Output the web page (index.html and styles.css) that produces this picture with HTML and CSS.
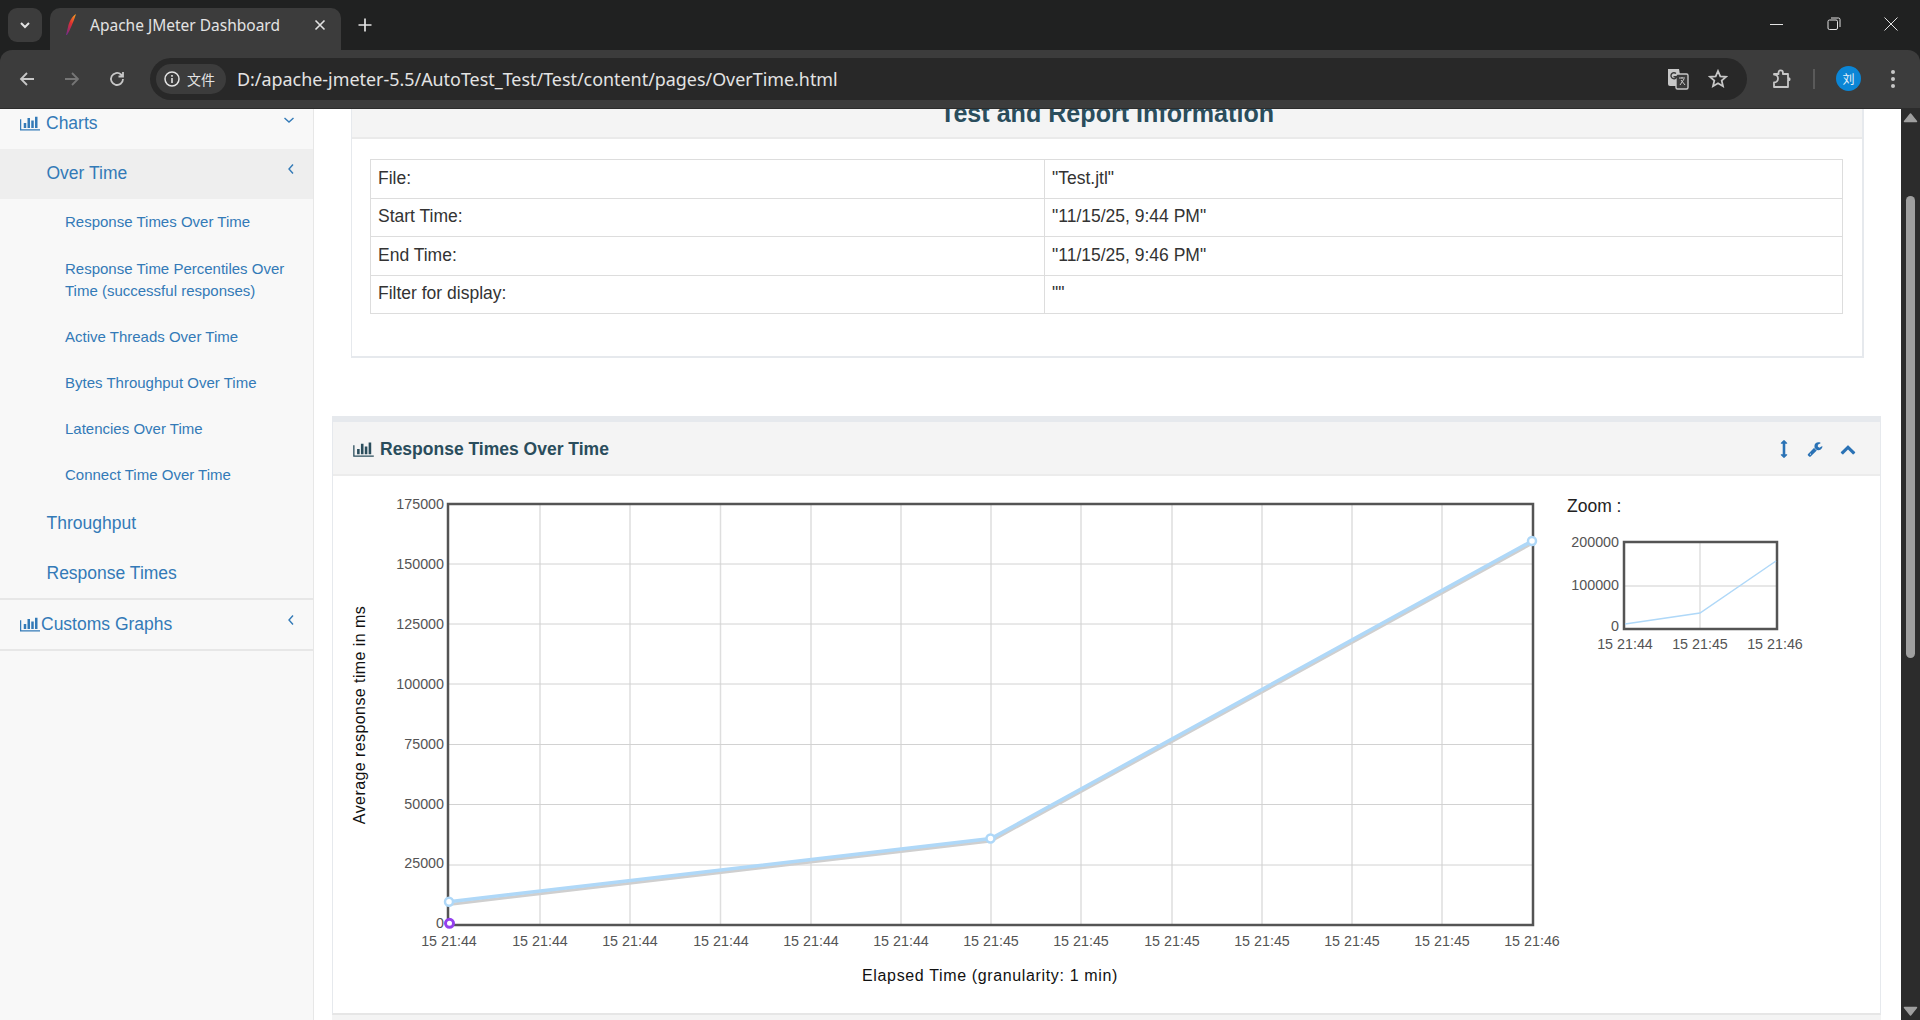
FILE: index.html
```html
<!DOCTYPE html>
<html lang="en">
<head>
<meta charset="utf-8">
<title>Apache JMeter Dashboard</title>
<link rel="stylesheet" href="styles.css">
</head>
<body>
<svg class="defs" width="0" height="0" aria-hidden="true">
  <symbol id="bars" viewBox="0 0 2048 1792"><path d="M640 896v512h-256v-512h256zm384-512v1024h-256v-1024h256zm1024 1152v128h-2048v-1152h128v1024h1920zm-640-896v768h-256v-768h256zm384-384v1152h-256v-1152h256z"/></symbol>
</svg>
<header class="browser">
  <div class="tabstrip">
    <button class="tabsearch"><svg width="14" height="14" viewBox="0 0 14 14"><path d="M3 5l4 4 4-4" fill="none" stroke="#e3e3e3" stroke-width="2"/></svg></button>
    <div class="tab">
      <svg class="favicon" width="12" height="22" viewBox="0 0 12 22"><defs><linearGradient id="fg" x1="0.8" y1="0" x2="0.2" y2="1"><stop offset="0" stop-color="#f69923"/><stop offset="0.45" stop-color="#e0302f"/><stop offset="1" stop-color="#7b2a86"/></linearGradient></defs><path d="M11 0C7 2 4 8 3 13L1 21l1 0C5 16 8 9 11 0z" fill="url(#fg)"/></svg>
      <span class="tab-title">Apache JMeter Dashboard</span>
      <svg class="tab-x" width="12" height="12" viewBox="0 0 12 12"><path d="M1.5 1.5l9 9m0-9l-9 9" stroke="#e3e3e3" stroke-width="1.6"/></svg>
    </div>
    <svg class="newtab" width="16" height="16" viewBox="0 0 16 16"><path d="M8 1.5v13M1.5 8h13" stroke="#e3e3e3" stroke-width="1.7"/></svg>
    <div class="winctl">
      <svg width="14" height="14" viewBox="0 0 14 14"><path d="M0 7.5h13" stroke="#e3e3e3" stroke-width="1"/></svg>
      <svg width="14" height="14" viewBox="0 0 14 14"><rect x="1" y="3" width="9.5" height="9.5" rx="1.5" fill="none" stroke="#e3e3e3"/><path d="M4 1h7.5a1.5 1.5 0 0 1 1.5 1.5V10" fill="none" stroke="#e3e3e3"/></svg>
      <svg width="14" height="14" viewBox="0 0 14 14"><path d="M.5.5l13 13m0-13l-13 13" stroke="#e3e3e3" stroke-width="1"/></svg>
    </div>
  </div>
  <div class="toolbar">
    <svg class="nav" width="18" height="18" viewBox="0 0 18 18"><path d="M16 9H3M9 3L3 9l6 6" fill="none" stroke="#c7c7c7" stroke-width="1.8"/></svg>
    <svg class="nav" width="18" height="18" viewBox="0 0 18 18"><path d="M2 9h13M9 3l6 6-6 6" fill="none" stroke="#757575" stroke-width="1.8"/></svg>
    <svg class="nav" width="18" height="18" viewBox="0 0 18 18"><path d="M15 9a6 6 0 1 1-2-4.5L15 6.5M15 2v4.5h-4.5" fill="none" stroke="#c7c7c7" stroke-width="1.8"/></svg>
    <div class="omnibox">
      <div class="chip">
        <svg width="16" height="16" viewBox="0 0 16 16"><circle cx="8" cy="8" r="7" fill="none" stroke="#e3e3e3" stroke-width="1.5"/><path d="M8 7v5M8 4v1.8" stroke="#e3e3e3" stroke-width="1.6"/></svg>
        <span class="chip-text">文件</span>
      </div>
      <span class="url">D:/apache-jmeter-5.5/AutoTest_Test/Test/content/pages/OverTime.html</span>
      <svg class="translate" width="22" height="22" viewBox="0 0 22 22"><path d="M1 1h11l3 17H3a2 2 0 0 1-2-2z" fill="#c7c7c7"/><rect x="9" y="6" width="12" height="15" rx="1.5" fill="#3a3a3a" stroke="#c7c7c7" stroke-width="1.4"/><path d="M12 10h6M15 9v1.5M13 17l4-6M14 12l4 5" stroke="#c7c7c7" fill="none"/><path d="M9 5.5a3 3 0 1 0 .8 3.2H6.5" fill="none" stroke="#3a3a3a" stroke-width="1.4"/></svg>
      <svg class="star" width="20" height="20" viewBox="0 0 20 20"><path d="M10 2l2.3 5.3 5.7.5-4.3 3.8 1.3 5.6L10 14.3l-5 2.9 1.3-5.6L2 7.8l5.7-.5z" fill="none" stroke="#c7c7c7" stroke-width="1.8"/></svg>
    </div>
    <svg class="ext" width="22" height="22" viewBox="0 0 22 22"><path d="M3 6h4.5V4.5a2.2 2.2 0 0 1 4.4 0V6H17v4.500h1.5a2.2 2.2 0 0 1 0 1.500H17v7H3v-4.500a3 3 0 0 0 0-8z" fill="none" stroke="#c7c7c7" stroke-width="1.8" stroke-linejoin="round"/></svg>
    <span class="divider"></span>
    <span class="avatar">刘</span>
    <svg class="dots" width="6" height="20" viewBox="0 0 6 20"><circle cx="3" cy="3" r="2" fill="#c7c7c7"/><circle cx="3" cy="10" r="2" fill="#c7c7c7"/><circle cx="3" cy="17" r="2" fill="#c7c7c7"/></svg>
  </div>
</header>
<div class="page">
  <nav class="sidebar">
    <div class="side-section">
      <a class="side-top raised"><svg class="bars-icon"><use href="#bars"/></svg><span class="side-label">Charts</span><svg class="angle" width="12" height="12" viewBox="0 0 12 12"><path d="M1.5 4L6 8l4.500-4" fill="none" stroke="#337ab7" stroke-width="1.4"/></svg></a>
      <a class="side-mid active raised">Over Time<svg class="angle angle-left" width="12" height="12" viewBox="0 0 12 12"><path d="M8 1.500L4 6l4 4.500" fill="none" stroke="#337ab7" stroke-width="1.4"/></svg></a>
      <ul class="side-sub">
        <li>Response Times Over Time</li>
        <li>Response Time Percentiles Over Time (successful responses)</li>
        <li>Active Threads Over Time</li>
        <li>Bytes Throughput Over Time</li>
        <li>Latencies Over Time</li>
        <li>Connect Time Over Time</li>
      </ul>
      <a class="side-mid">Throughput</a>
      <a class="side-mid">Response Times</a>
    </div>
    <div class="side-section last">
      <a class="side-top"><svg class="bars-icon"><use href="#bars"/></svg><span class="side-label tight">Customs Graphs</span><svg class="angle angle-left" width="12" height="12" viewBox="0 0 12 12"><path d="M8 1.500L4 6l4 4.500" fill="none" stroke="#337ab7" stroke-width="1.4"/></svg></a>
    </div>
  </nav>
  <main class="main">
    <section class="panel info">
      <div class="info-head"><h2 class="info-title">Test and Report Information</h2></div>
      <div class="info-body">
        <table class="info-table">
          <tr><td class="k">File:</td><td>"Test.jtl"</td></tr>
          <tr><td class="k">Start Time:</td><td>"11/15/25, 9:44 PM"</td></tr>
          <tr><td class="k">End Time:</td><td>"11/15/25, 9:46 PM"</td></tr>
          <tr><td class="k">Filter for display:</td><td>""</td></tr>
        </table>
      </div>
    </section>
    <section class="panel graph">
      <div class="graph-head">
        <svg class="bars-icon dark"><use href="#bars"/></svg>
        <h2 class="graph-title">Response Times Over Time</h2>
        <div class="graph-tools">
          <svg class="tool-arrows" width="18" height="18" viewBox="0 0 1792 1792"><path d="M1216 320q0 26-19 45t-45 19h-128v1024h128q26 0 45 19t19 45-19 45l-256 256q-19 19-45 19t-45-19l-256-256q-19-19-19-45t19-45 45-19h128v-1024h-128q-26 0-45-19t-19-45 19-45l256-256q19-19 45-19t45 19l256 256q19 19 19 45z"/></svg>
          <svg width="16" height="16" viewBox="0 0 1792 1792"><path d="M448 1472q0-26-19-45t-45-19-45 19-19 45 19 45 45 19 45-19 19-45zm644-420l-682 682q-37 37-90 37-52 0-91-37l-106-108q-38-36-38-90 0-53 38-91l681-681q39 98 114.500 173.500t173.500 114.500zm634-435q0 39-23 106-47 134-164.500 217.500t-258.500 83.500q-185 0-316.500-131.500t-131.500-316.500 131.500-316.500 316.500-131.500q58 0 121.500 16.500t107.500 46.500q16 11 16 28t-16 28l-293 169v224l193 106q5-3 79-48.500t135.500-81 70.500-35.500q15 0 23.500 10t8.500 25z"/></svg>
          <svg width="16" height="16" viewBox="0 0 1792 1792"><path d="M1683 1331l-166 165q-19 19-45 19t-45-19l-531-531-531 531q-19 19-45 19t-45-19l-166-165q-19-19-19-45.500t19-45.500l742-741q19-19 45-19t45 19l742 741q19 19 19 45.500t-19 45.500z"/></svg>
        </div>
      </div>
      <svg class="chart" width="1548" height="537" viewBox="333 476 1548 537">
        <g class="grid">
          <path class="gv" d="M540 504V924M630 504V924M720.500 504V924M811 504V924M901 504V924M991 504V924M1081 504V924M1172 504V924M1262 504V924M1352 504V924M1442 504V924"/>
          <path class="gh" d="M449 865H1532M449 804.500H1532M449 744.500H1532M449 684H1532M449 624H1532M449 564H1532"/>
        </g>
        <rect class="frame" x="448" y="504" width="1085" height="421"/>
        <polyline class="shadow" points="449,904.500 991,841 1532,543.500"/>
        <polyline class="series" points="449,901.700 991,838.500 1532,541"/>
        <circle class="pt" cx="449" cy="901.700" r="4"/>
        <circle class="pt" cx="990.500" cy="838.500" r="4"/>
        <circle class="pt" cx="1532" cy="541" r="4"/>
        <circle class="pt2" cx="449.500" cy="923.300" r="4"/>
        <g class="ticks yt">
          <text x="444" y="508.500">175000</text><text x="444" y="568.500">150000</text><text x="444" y="628.500">125000</text><text x="444" y="688.500">100000</text><text x="444" y="748.500">75000</text><text x="444" y="808.500">50000</text><text x="444" y="868">25000</text><text x="444" y="928">0</text>
        </g>
        <g class="ticks xt">
          <text x="449" y="946">15 21:44</text><text x="540" y="946">15 21:44</text><text x="630" y="946">15 21:44</text><text x="721" y="946">15 21:44</text><text x="811" y="946">15 21:44</text><text x="901" y="946">15 21:44</text><text x="991" y="946">15 21:45</text><text x="1081" y="946">15 21:45</text><text x="1172" y="946">15 21:45</text><text x="1262" y="946">15 21:45</text><text x="1352" y="946">15 21:45</text><text x="1442" y="946">15 21:45</text><text x="1532" y="946">15 21:46</text>
        </g>
        <text class="axis-x" x="990" y="981">Elapsed Time (granularity: 1 min)</text>
        <text class="axis-y" transform="translate(365 715) rotate(-90)">Average response time in ms</text>
        <text class="zoom-label" x="1567" y="512">Zoom :</text>
        <path class="mgrid" d="M1700 543V628M1625 586H1776"/>
        <rect class="mframe" x="1624" y="542" width="153" height="87"/>
        <polyline class="mline" points="1625,624 1700,613 1776,561"/>
        <g class="ticks yt">
          <text x="1619" y="547">200000</text><text x="1619" y="590">100000</text><text x="1619" y="631">0</text>
        </g>
        <g class="ticks xt">
          <text x="1625" y="649">15 21:44</text><text x="1700" y="649">15 21:45</text><text x="1775" y="649">15 21:46</text>
        </g>
      </svg>
    </section>
    <section class="panel next"></section>
  </main>
  <aside class="scrollbar">
    <svg class="sb-arrow" width="19" height="18" viewBox="0 0 19 18"><path d="M9.500 5L15.500 12.500H3.500z" fill="#9f9f9f" stroke="#9f9f9f" stroke-width="1.5" stroke-linejoin="round"/></svg>
    <div class="sb-track"><div class="sb-thumb"></div></div>
    <svg class="sb-arrow" width="19" height="18" viewBox="0 0 19 18"><path d="M9.500 13L15.500 5.500H3.500z" fill="#9f9f9f" stroke="#9f9f9f" stroke-width="1.5" stroke-linejoin="round"/></svg>
  </aside>
</div>
</body>
</html>
```
FILE: styles.css
```css
* { box-sizing: border-box; }
html, body { margin: 0; height: 1020px; overflow: hidden; }
body { font-family: "Liberation Sans", Arial, sans-serif; background: #fff; color: #333; display: flex; flex-direction: column; }
.defs { position: absolute; }
h2 { margin: 0; }
ul { list-style: none; margin: 0; padding: 0; }

/* browser chrome */
.browser { flex: none; height: 109px; background: #202121; display: flex; flex-direction: column; }
.tabstrip { height: 50px; display: flex; align-items: flex-start; position: relative; padding: 8px 0 0 8px; }
.tabsearch { width: 34px; height: 34px; background: #3c3c3c; border: 0; border-radius: 9px; padding: 0; margin-right: 8px; display: flex; align-items: center; justify-content: center; }
.tab { width: 291px; height: 42px; background: #3c3c3c; border-radius: 10px 10px 0 0; display: flex; align-items: center; padding: 0 0 8px 15px; position: relative; }
.favicon { flex: none; }
.tab-title { font-family: "Noto Sans", sans-serif; font-size: 15.500px; color: #e3e3e3; margin-left: 13px; white-space: nowrap; width: 219px; flex: none; }
.tab-x { flex: none; margin-left: 5px; }
.newtab { margin: 9px 0 0 16px; }
.winctl { margin-left: auto; width: 150px; display: flex; justify-content: space-between; padding: 9px 22px 0 0; }
.toolbar { flex: none; height: 59px; background: #3c3c3c; border-bottom: 1px solid #2c2c2c; border-radius: 12px 12px 0 0; display: flex; align-items: center; padding: 0 0 1px 18px; position: relative; }
.nav { flex: none; margin-right: 27px; }
.omnibox { width: 1597px; height: 42px; margin-left: -3px; background: #282828; border-radius: 21px; display: flex; align-items: center; padding: 0 19px 0 6px; flex: none; }
.chip { width: 70px; height: 30px; border-radius: 15px; background: #3c3c3c; display: flex; align-items: center; padding-left: 8px; flex: none; }
.chip-text { font-family: "Noto Sans CJK SC", sans-serif; font-size: 14px; color: #e3e3e3; margin-left: 7px; }
.url { font-family: "Noto Sans", sans-serif; font-size: 17.900px; color: #e3e3e3; margin-left: 11px; white-space: nowrap; }
.translate { margin-left: auto; }
.star { margin-left: 19px; }
.ext { flex: none; margin-left: 24px; }
.divider { width: 2px; height: 20px; background: #5a5a5a; margin-left: 20px; flex: none; }
.avatar { width: 25px; height: 25px; border-radius: 50%; background: #0b86d6; color: #e8f3fb; font-family: "Noto Sans CJK SC", sans-serif; font-size: 12px; display: flex; align-items: center; justify-content: center; margin-left: 21px; flex: none; }
.dots { margin-left: 29px; flex: none; }

/* page */
.page { flex: 1; min-height: 0; display: flex; }
.sidebar { flex: none; width: 314px; background: #f8f8f8; border-right: 1px solid #e7e7e7; color: #337ab7; overflow: hidden; }
.side-section { margin-top: -10px; border-bottom: 2px solid #e7e7e7; }
.side-section.last { margin-top: 0; }
.side-top { display: flex; align-items: center; height: 50px; padding-left: 20px; font-size: 17.500px; position: relative; }
.last .side-top { height: 49px; padding-bottom: 1px; }
.side-mid { display: flex; align-items: center; height: 50px; padding-left: 46.500px; font-size: 17.500px; position: relative; }
.side-mid.active { background: #eee; }
.raised { padding-bottom: 2px; }
.side-sub { padding-left: 65px; padding-right: 20px; font-size: 15px; line-height: 22px; }
.side-sub li { padding: 12px 0; }
.side-sub li:first-child { padding-bottom: 13px; }
.bars-icon { width: 20px; height: 18px; fill: #337ab7; flex: none; }
.bars-icon.dark { fill: #2a4d5c; width: 21px; height: 18px; }
.side-label { margin-left: 6px; }
.side-label.tight { margin-left: 1px; }
.angle { position: absolute; right: 18px; top: 15px; }
.angle-left { right: 16px; top: 14px; }

/* main column */
.main { flex: 1; min-width: 0; overflow: hidden; padding: 0 20px 0 18px; }
.panel { background: #fff; }
.info { margin: -40px 17px 58px 19px; border: 2px solid #e6e9ed; border-width: 2px 2px 2px 1.500px; }
.info-head { height: 68px; background: #f4f4f4; border-bottom: 2px solid #eaeaea; padding-top: 27px; text-align: center; }
.info-title { font-size: 25.100px; line-height: 30px; color: #2a4d5c; }
.info-body { padding: 20px 19px 42px 18px; }
.info-table { width: 100%; border-collapse: collapse; font-size: 17.500px; table-layout: fixed; }
.info-table td { border: 1.500px solid #ddd; height: 38.500px; padding: 0 7px 1px; }
.info-table .k { width: 674px; }
.graph { border: 1px solid #e6e9ed; border-top: 6px solid #e6e9ed; border-bottom: 2px solid #e6e6e6; height: 599px; }
.graph-head { height: 54px; background: #f4f4f4; border-bottom: 2px solid #ececec; display: flex; align-items: center; padding: 2px 24px 0 20px; }
.graph-title { font-size: 17.500px; color: #2a4d5c; margin-left: 6px; }
.graph-tools { margin-left: auto; display: flex; align-items: center; gap: 17px; fill: #2a72b5; }
.tool-arrows { margin-right: -3px; }
.next { height: 20px; background: #f4f4f4; }

/* chart */
.chart { display: block; }
.gv { fill: none; stroke: #dedede; stroke-width: 1.500; }
.gh { fill: none; stroke: #d2d2d2; stroke-width: 1; }
.frame { fill: none; stroke: #545454; stroke-width: 2.500; }
.series { fill: none; stroke: #afd8f8; stroke-width: 3.500; }
.shadow { fill: none; stroke: #cfcfcf; stroke-width: 3; }
.pt { fill: #fff; stroke: #afd8f8; stroke-width: 2.500; }
.pt2 { fill: #fff; stroke: #9440ed; stroke-width: 3; }
.ticks text { font-size: 14.300px; fill: #545454; }
.yt text { text-anchor: end; }
.xt text { text-anchor: middle; }
.axis-x { font-size: 16px; letter-spacing: .64px; text-anchor: middle; fill: #111; }
.axis-y { font-size: 16px; letter-spacing: .42px; text-anchor: middle; fill: #111; }
.zoom-label { font-size: 17.500px; fill: #222; }
.mgrid { fill: none; stroke: #e0e0e0; stroke-width: 1.500; }
.mframe { fill: none; stroke: #545454; stroke-width: 2.500; }
.mline { fill: none; stroke: #afd8f8; stroke-width: 1.500; }

/* scrollbar */
.scrollbar { flex: none; width: 19px; background: #2c2c2c; display: flex; flex-direction: column; }
.sb-arrow { flex: none; }
.sb-track { flex: 1; padding: 69px 5px 0; }
.sb-thumb { height: 462px; background: #9f9f9f; border-radius: 5px; }
```
